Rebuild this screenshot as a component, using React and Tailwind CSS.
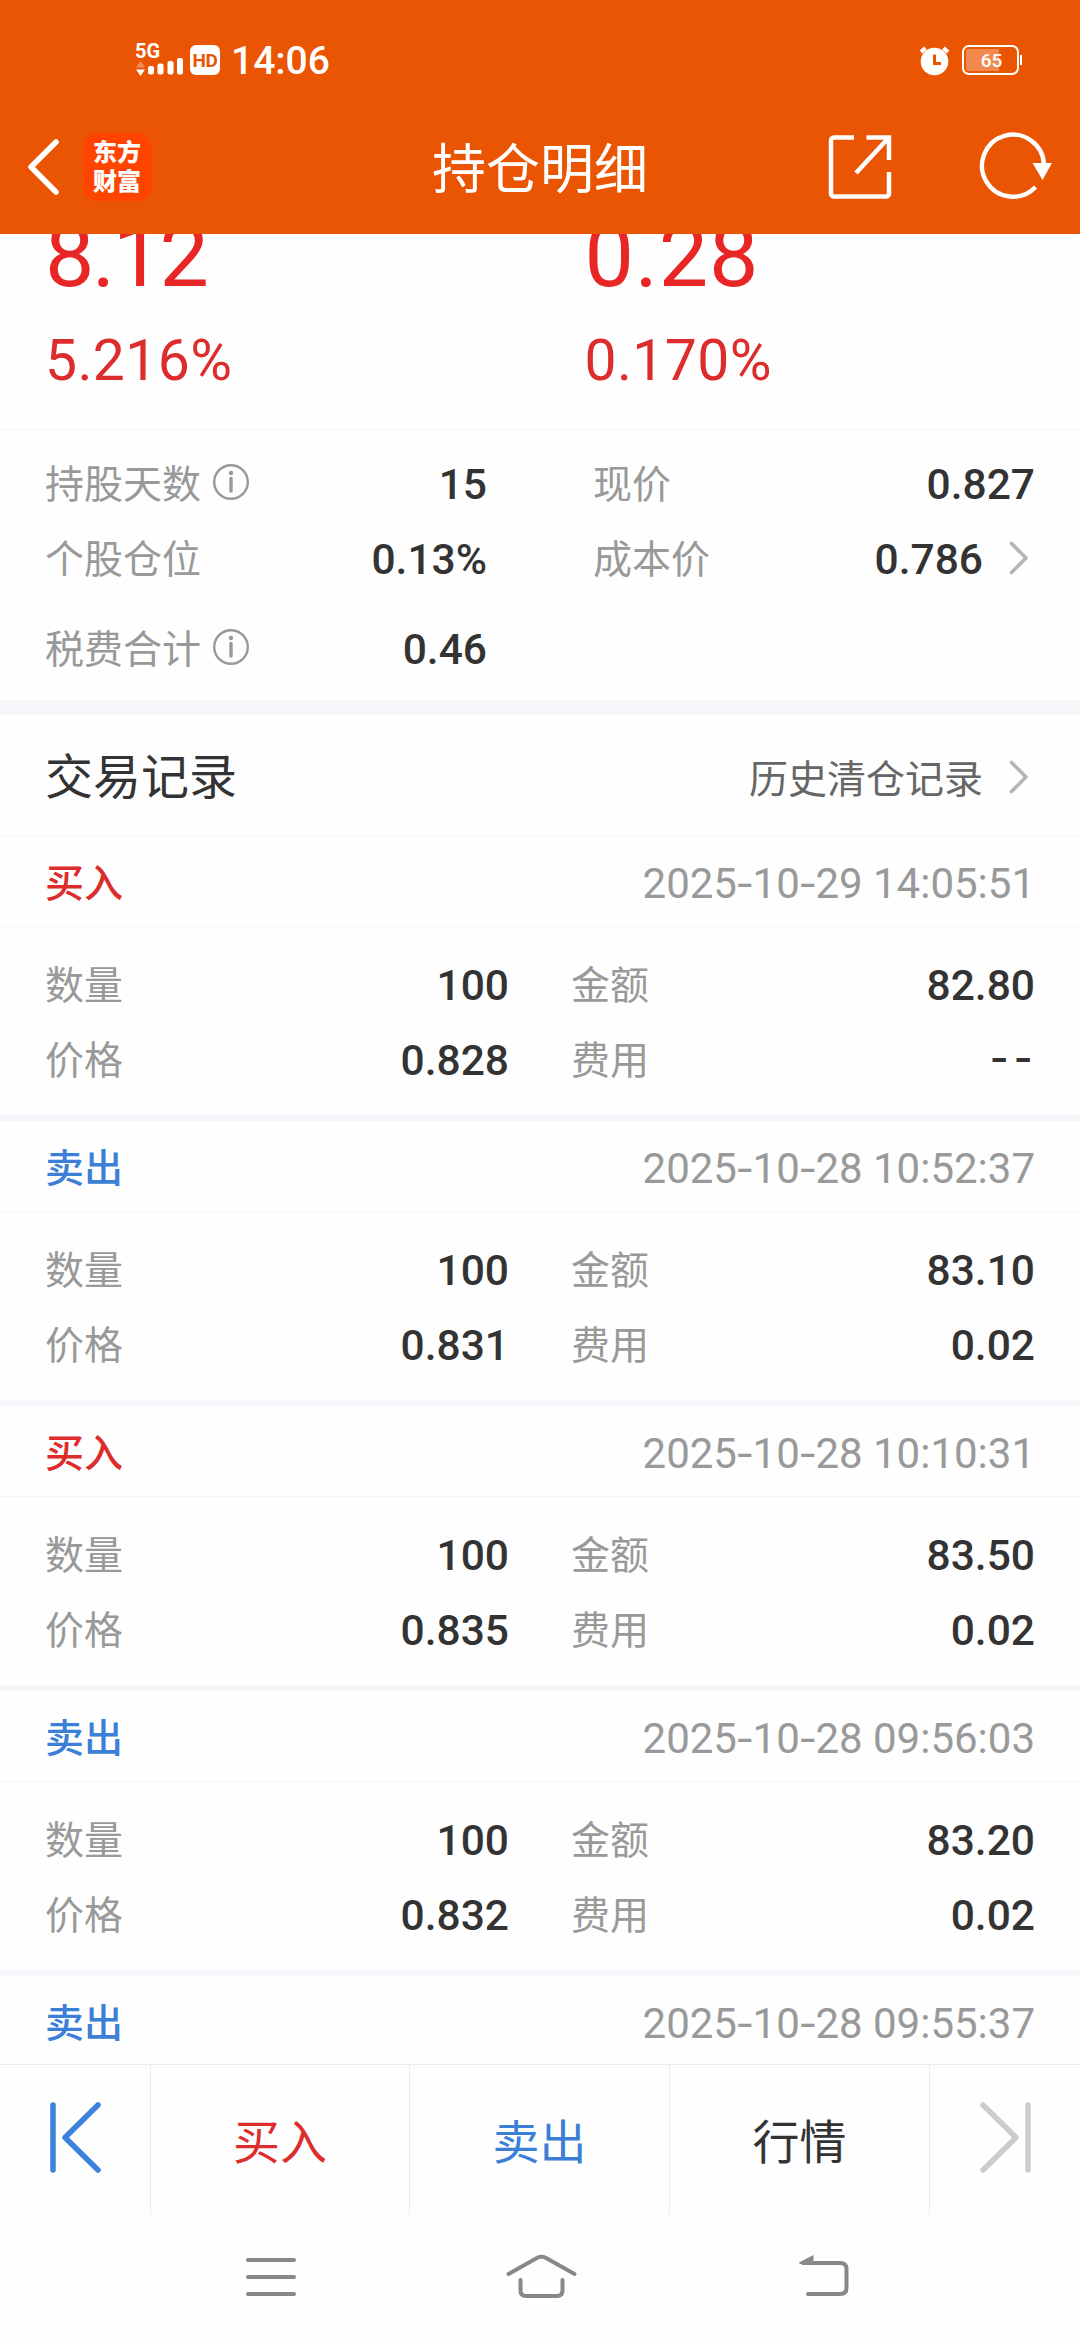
import React from "react";

const records = [
  { type: "buy", time: "2025-10-29 14:05:51", count: "100", amount: "82.80", price: "0.828", fee: "--" },
  { type: "sell", time: "2025-10-28 10:52:37", count: "100", amount: "83.10", price: "0.831", fee: "0.02" },
  { type: "buy", time: "2025-10-28 10:10:31", count: "100", amount: "83.50", price: "0.835", fee: "0.02" },
  { type: "sell", time: "2025-10-28 09:56:03", count: "100", amount: "83.20", price: "0.832", fee: "0.02" },
  { type: "sell", time: "2025-10-28 09:55:37" },
];

const InfoIcon = () => (
  <svg width="38" height="38" viewBox="0 0 38 38" fill="none" className="ml-[11px] -mt-1">
    <circle cx="19" cy="19" r="16.8" stroke="#999" strokeWidth="2.4" />
    <circle cx="19" cy="10" r="2.2" fill="#999" />
    <path d="M19 15.5v12.5" stroke="#999" strokeWidth="3.4" strokeLinecap="round" />
  </svg>
);

const ChevronRight = () => (
  <svg width="20" height="34" viewBox="0 0 20 34" fill="none" className="-mt-px ml-[26px] mr-[6px]">
    <path d="M2.5 2.5L17 17L2.5 31.5" stroke="#b5b5b5" strokeWidth="3.6" strokeLinecap="round" strokeLinejoin="round" />
  </svg>
);

// Date and time with slightly wider hyphens
const Timestamp = ({ value }) => (
  <span className="text-[42px] leading-[50px] text-[#999]">
    {value.split("-").map((part, i) => (
      <React.Fragment key={i}>
        {i > 0 && <span className="inline-block mx-[2px] scale-x-130">-</span>}
        {part}
      </React.Fragment>
    ))}
  </span>
);

const StatusBar = () => (
  <div className="h-[100px] flex pt-[43px] pl-[136px] pr-[60px]">
    <div className="w-[48px] h-[34px] relative">
      <span className="absolute -left-px -top-px text-[20px] leading-[18px] font-bold">5G</span>
      <svg width="48" height="34" viewBox="0 0 48 34" fill="#fff">
        <path d="M4.5 18L9 24.5H0z" fillOpacity="0.35" />
        <path d="M0 26.500H9L4.500 33z" />
        <rect x="12" y="23" width="6" height="8.500" rx="2" />
        <rect x="21.500" y="20.500" width="6" height="11" rx="2" />
        <rect x="31.500" y="18" width="6" height="13.500" rx="2" />
        <rect x="41" y="15" width="6" height="16.500" rx="2" />
      </svg>
    </div>
    <div className="ml-[6px] mt-[2px] w-[30px] h-[30px] rounded-[6px] bg-white text-[#ea5504] text-[19px] leading-[31px] font-bold text-center tracking-[-0.5px]">
      HD
    </div>
    <div className="ml-[11px] -mt-[2px] text-[39px] leading-[40px] font-medium">14:06</div>
    <svg width="32" height="32" viewBox="0 0 32 32" className="ml-auto mt-[2px]">
      <circle cx="15.500" cy="16.500" r="13.800" fill="#fff" />
      <path d="M2 7L6.500 3M29 7L24.500 3" stroke="#fff" strokeWidth="4" />
      <path d="M15.500 9.500v9H22" stroke="#ea5504" strokeWidth="3" fill="none" />
    </svg>
    <div className="ml-[11px] mt-[2px] mr-px w-[57px] h-[30px] border-2 border-white rounded-[7px] p-[2px] relative">
      <div className="w-[33px] h-[22px] bg-[#f28a50] rounded-l-[3px]" />
      <span className="absolute inset-0 text-center pl-[2px] text-[19px] leading-[27px] font-medium">65</span>
      <span className="absolute -right-[5px] top-[8px] w-[2px] h-[10px] bg-white" />
    </div>
  </div>
);

const NavBar = () => (
  <div className="h-[134px] flex items-center pl-[25px] pr-[28px]">
    <svg width="35" height="58" viewBox="0 0 35 58" fill="none">
      <path d="M31 4L6 29L31 54" stroke="#fff" strokeWidth="5.500" strokeLinecap="round" strokeLinejoin="round" />
    </svg>
    <div className="ml-[23px] w-[68px] h-[68px] rounded-[14px] bg-[#ff4400] pb-[5px] flex flex-col items-center justify-center text-[24px] leading-[29px] font-black font-['Noto_Sans_CJK_SC',sans-serif]">
      <span>东方</span>
      <span>财富</span>
    </div>
    <h1 className="ml-[281px] pt-[7px] text-[54px] leading-[60px]">持仓明细</h1>
    <svg width="66" height="66" viewBox="0 0 66 66" fill="none" stroke="#fff" strokeWidth="4.500" className="ml-[179px]">
      <path d="M27 3.500H7a3 3 0 0 0-3 3V59.500a3 3 0 0 0 3 3H59a3 3 0 0 0 3-3V38" />
      <path d="M39.500 3.500H62V26M61 4.500L29 39" />
    </svg>
    <svg width="74" height="70" viewBox="0 0 74 70" fill="none" className="ml-auto -mt-[2px]">
      <path d="M57.500 56A31 31 0 1 1 66 34" stroke="#fff" strokeWidth="4.400" />
      <path d="M54.500 32H74L64.500 49z" fill="#fff" />
    </svg>
  </div>
);

const Stat = ({ label, value, info, arrow }) => (
  <div className="h-[75px] flex items-center">
    <span className="pt-[3px] text-[39px] leading-[44px] text-[#999]">{label}</span>
    {info && <InfoIcon />}
    {value === "--" ? (
      <span className="ml-auto mr-[4px] -mt-[4px] text-[43px] leading-[50px] font-medium flex gap-[10px]">
        <span className="scale-x-120">-</span>
        <span className="scale-x-120">-</span>
      </span>
    ) : (
      <span className="ml-auto pt-[2px] text-[42.5px] leading-[50px] font-medium">{value}</span>
    )}
    {arrow && <ChevronRight />}
  </div>
);

const RecordCard = ({ record }) => {
  const isBuy = record.type === "buy";
  return (
    <div className="shrink-0 border-b-[6px] border-[#f6f7fa]">
      <div className="h-[91px] px-[45px] flex items-center justify-between border-b border-[#f4f4f5] pt-[6px]">
        <span className={`text-[39px] leading-[44px] font-medium ${isBuy ? "text-[#dd2c2c]" : "text-[#3b7fd6]"}`}>
          {isBuy ? "买入" : "卖出"}
        </span>
        <Timestamp value={record.time} />
      </div>
      {record.count && (
        <div className="h-[188px] pt-[20px] px-[45px] grid grid-cols-[464px_464px] justify-between content-start">
          <Stat label="数量" value={record.count} />
          <Stat label="金额" value={record.amount} />
          <Stat label="价格" value={record.price} />
          <Stat label="费用" value={record.fee} />
        </div>
      )}
    </div>
  );
};

const BottomActions = () => (
  <div className="h-[150px] shrink-0 border-t border-[#ececee] grid grid-cols-[151px_259px_260px_260px_150px] text-[47px] leading-[56px] divide-x divide-[#ececee]">
    <div className="flex items-center pl-[50px] pb-[6px]">
      <svg width="52" height="72" viewBox="0 0 52 72" fill="none" stroke="#3b82dc" strokeLinecap="round" strokeLinejoin="round" strokeWidth="5.500">
        <path d="M3 4V69M48 4L15 36.500L48 69" />
      </svg>
    </div>
    <div className="flex items-center justify-center pt-[7px] text-[#dd2c2c]">买入</div>
    <div className="flex items-center justify-center pt-[7px] text-[#3b7fd6]">卖出</div>
    <div className="flex items-center justify-center pt-[7px]">行情</div>
    <div className="flex items-center justify-end pr-[49px] pb-[6px]">
      <svg width="52" height="72" viewBox="0 0 52 72" fill="none" stroke="#ccc" strokeLinecap="round" strokeLinejoin="round" strokeWidth="5.500">
        <path d="M49 4V69M4 4L37 36.500L4 69" />
      </svg>
    </div>
  </div>
);

const SystemNav = () => (
  <div className="h-[126px] shrink-0 flex pt-[36px] pl-[244px]">
    <svg width="54" height="50" viewBox="0 0 54 50" stroke="#888" strokeWidth="4" strokeLinecap="round">
      <path d="M4 10H50M4 27H50M4 44H50" />
    </svg>
    <svg width="72" height="50" viewBox="0 0 72 50" fill="none" stroke="#888" strokeWidth="4" strokeLinecap="round" strokeLinejoin="round" className="ml-[207px]">
      <path d="M3.500 24L31 8.500Q36.500 5 42 8.500L69.500 24" />
      <path d="M15.500 30V40.500Q15.500 46 21 46H52Q57.500 46 57.500 40.500V30" />
    </svg>
    <svg width="54" height="50" viewBox="0 0 54 50" fill="none" className="ml-[221px]">
      <path d="M10 44H42Q48.500 44 48.500 38V19Q48.500 13 42 13H5" stroke="#888" strokeWidth="4" strokeLinecap="round" />
      <path d="M1 12.500L15.500 5V14H2z" fill="#888" />
    </svg>
  </div>
);

export default function App() {
  return (
    <div className="w-[1080px] h-[2340px] overflow-hidden flex flex-col bg-[#fefefe] text-[#333] font-[Roboto,'Noto_Sans_CJK_SC',sans-serif]">
      <header className="h-[234px] shrink-0 bg-[#ea5504] text-white">
        <StatusBar />
        <NavBar />
      </header>

      <main className="flex-1 min-h-0 overflow-hidden flex flex-col">
        {/* Profit summary, scrolled partly under the header */}
        <section className="h-[196px] shrink-0 overflow-hidden border-b border-[#f4f4f5] grid grid-cols-2 pl-[45px] text-[#e92626]">
          <div className="-mt-[22px]">
            <p className="text-[88px] leading-[88px] tracking-[-2.5px]">8.12</p>
            <p className="mt-[31px] text-[57px] leading-[60px] tracking-[0.4px] text-[#dd2c2c]">5.216%</p>
          </div>
          <div className="-mt-[22px] pl-[22px]">
            <p className="text-[88px] leading-[88px] tracking-[0.8px]">0.28</p>
            <p className="mt-[31px] text-[57px] leading-[60px] tracking-[0.4px] text-[#dd2c2c]">0.170%</p>
          </div>
        </section>

        <section className="h-[285px] shrink-0 pt-[16px] px-[45px] border-b-[15px] border-[#f6f7fa] grid grid-cols-[442px_442px] justify-between content-start">
          <Stat label="持股天数" value="15" info />
          <Stat label="现价" value="0.827" />
          <Stat label="个股仓位" value="0.13%" />
          <Stat label="成本价" value="0.786" arrow />
          <div className="mt-[15px]">
            <Stat label="税费合计" value="0.46" info />
          </div>
        </section>

        <div className="h-[121px] shrink-0 px-[45px] flex items-center justify-between border-b border-[#f4f4f5]">
          <h2 className="pt-[6px] text-[48px] leading-[56px]">交易记录</h2>
          <div className="flex items-center pt-[4px] text-[39px] leading-[44px] text-[#666]">
            <span className="pt-[5px]">历史清仓记录</span>
            <ChevronRight />
          </div>
        </div>

        {records.map((record) => (
          <RecordCard key={record.time} record={record} />
        ))}
      </main>

      <BottomActions />
      <SystemNav />
    </div>
  );
}
